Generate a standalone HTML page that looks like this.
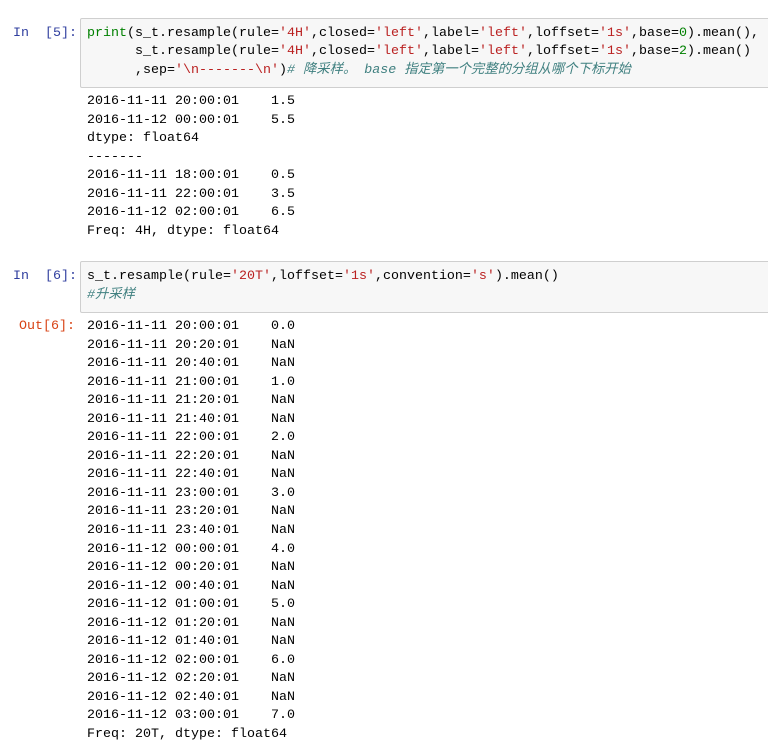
<!DOCTYPE html>
<html><head><meta charset="utf-8"><style>
body{margin:0;background:#fff;width:768px;height:753px;overflow:hidden;position:relative;font-family:"Liberation Mono","Noto Sans CJK SC",monospace;font-size:13.33px;color:#000}
.l{position:absolute;white-space:pre;line-height:16px}
.box{position:absolute;left:80px;width:700px;background:#f7f7f7;border:1px solid #cfcfcf;border-radius:2px}
.p{color:#303f9f}.o{color:#d84315}
.g{color:#008000}.s{color:#ba2121}.c{color:#408080;font-style:italic}
</style></head><body>
<div class="box" style="top:18px;height:68px"></div>
<div class="box" style="top:261px;height:50px"></div>
<div class="l p" style="left:13px;top:26px">In  [5]:</div>
<div class="l" style="left:87px;top:26px"><span class="g">print</span>(s_t.resample(rule=<span class="s">'4H'</span>,closed=<span class="s">'left'</span>,label=<span class="s">'left'</span>,loffset=<span class="s">'1s'</span>,base=<span class="g">0</span>).mean(),</div>
<div class="l" style="left:87px;top:44px">      s_t.resample(rule=<span class="s">'4H'</span>,closed=<span class="s">'left'</span>,label=<span class="s">'left'</span>,loffset=<span class="s">'1s'</span>,base=<span class="g">2</span>).mean()</div>
<div class="l" style="left:87px;top:63px">      ,sep=<span class="s">'\n-------\n'</span>)<span class="c"># 降采样。 base 指定第一个完整的分组从哪个下标开始</span></div>
<div class="l" style="left:87px;top:93px;line-height:18.57px">2016-11-11 20:00:01    1.5
2016-11-12 00:00:01    5.5
dtype: float64
-------
2016-11-11 18:00:01    0.5
2016-11-11 22:00:01    3.5
2016-11-12 02:00:01    6.5
Freq: 4H, dtype: float64</div>
<div class="l p" style="left:13px;top:269px">In  [6]:</div>
<div class="l" style="left:87px;top:269px">s_t.resample(rule=<span class="s">'20T'</span>,loffset=<span class="s">'1s'</span>,convention=<span class="s">'s'</span>).mean()</div>
<div class="l c" style="left:87px;top:288px">#升采样</div>
<div class="l o" style="left:19px;top:319px">Out[6]:</div>
<div class="l" style="left:87px;top:318px;line-height:18.55px">2016-11-11 20:00:01    0.0
2016-11-11 20:20:01    NaN
2016-11-11 20:40:01    NaN
2016-11-11 21:00:01    1.0
2016-11-11 21:20:01    NaN
2016-11-11 21:40:01    NaN
2016-11-11 22:00:01    2.0
2016-11-11 22:20:01    NaN
2016-11-11 22:40:01    NaN
2016-11-11 23:00:01    3.0
2016-11-11 23:20:01    NaN
2016-11-11 23:40:01    NaN
2016-11-12 00:00:01    4.0
2016-11-12 00:20:01    NaN
2016-11-12 00:40:01    NaN
2016-11-12 01:00:01    5.0
2016-11-12 01:20:01    NaN
2016-11-12 01:40:01    NaN
2016-11-12 02:00:01    6.0
2016-11-12 02:20:01    NaN
2016-11-12 02:40:01    NaN
2016-11-12 03:00:01    7.0
Freq: 20T, dtype: float64</div>
</body></html>
